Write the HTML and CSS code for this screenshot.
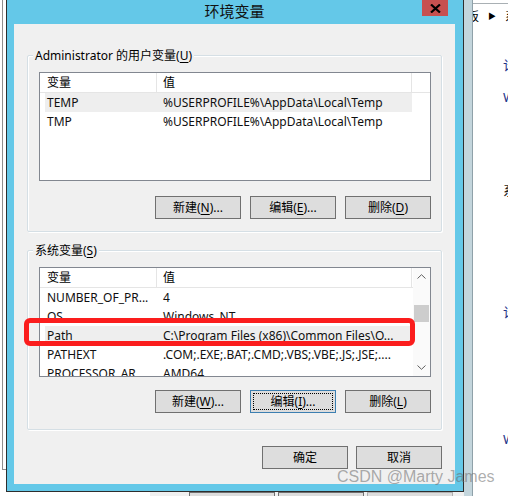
FILE: index.html
```html
<!DOCTYPE html>
<html lang="zh-CN">
<head>
<meta charset="utf-8">
<title>环境变量</title>
<link rel="stylesheet" href="styles.css">
</head>
<body>
<div class="desktop">
  <div class="win-left"></div>

  <div class="win-back">
    <span class="bk-btn">确定</span>
    <span class="bk-btn">取消</span>
    <span class="bk-btn bk-dis">应用(A)</span>
  </div>

  <div class="explorer">
    <div class="ex-frame"></div>
    <div class="ex-pane">
      <div class="ex-addr"><span>板</span><span class="tri">▶</span><span>系统</span></div>
      <div class="ex-line l1">计算机的基本信息</div>
      <div class="ex-line l2">Windows 版本</div>
      <div class="ex-line l3">系统</div>
      <div class="ex-line l4">计算机名、域和工作组设置</div>
      <div class="ex-line l5">Windows 激活</div>
    </div>
  </div>

  <div class="dialog">
    <div class="titlebar">
      <span class="title">环境变量</span>
      <span class="close"><svg width="11" height="9" viewBox="0 0 11 9"><path d="M1 0.5 L10 8.5 M10 0.5 L1 8.5" stroke="#000" stroke-width="2.2" fill="none"/></svg></span>
    </div>
    <div class="content">
      <div class="group g1">
        <div class="glabel">Administrator 的用户变量(<u>U</u>)</div>
        <div class="list">
          <div class="lmain">
            <div class="lhead"><span class="h1">变量</span><span class="h2">值</span></div>
            <div class="row sel"><span class="c1">TEMP</span><span class="c2">%USERPROFILE%\AppData\Local\Temp</span></div>
            <div class="row"><span class="c1">TMP</span><span class="c2">%USERPROFILE%\AppData\Local\Temp</span></div>
          </div>
        </div>
        <div class="btns">
          <span class="btn">新建(<u>N</u>)...</span>
          <span class="btn">编辑(<u>E</u>)...</span>
          <span class="btn">删除(<u>D</u>)</span>
        </div>
      </div>

      <div class="group g2">
        <div class="glabel">系统变量(<u>S</u>)</div>
        <div class="list">
          <div class="lmain">
            <div class="lhead"><span class="h1">变量</span><span class="h2">值</span></div>
            <div class="row"><span class="c1">NUMBER_OF_PR...</span><span class="c2">4</span></div>
            <div class="row"><span class="c1">OS</span><span class="c2">Windows_NT</span></div>
            <div class="row sel"><span class="c1">Path</span><span class="c2">C:\Program Files (x86)\Common Files\O...</span></div>
            <div class="row"><span class="c1">PATHEXT</span><span class="c2">.COM;.EXE;.BAT;.CMD;.VBS;.VBE;.JS;.JSE;....</span></div>
            <div class="row"><span class="c1">PROCESSOR_AR...</span><span class="c2">AMD64</span></div>
          </div>
          <div class="sbar">
            <span class="sarrow"><svg width="9" height="5" viewBox="0 0 9 5"><path d="M0.5 4.5 L4.5 0.7 L8.5 4.5" stroke="#606060" fill="none"/></svg></span>
            <span class="thumb"></span>
            <span class="spacer"></span>
            <span class="sarrow"><svg width="9" height="5" viewBox="0 0 9 5"><path d="M0.5 0.5 L4.5 4.3 L8.5 0.5" stroke="#606060" fill="none"/></svg></span>
          </div>
        </div>
        <div class="btns">
          <span class="btn">新建(<u>W</u>)...</span>
          <span class="btn focus">编辑(<u>I</u>)...</span>
          <span class="btn">删除(<u>L</u>)</span>
        </div>
      </div>

      <div class="dlg-btns">
        <span class="btn">确定</span>
        <span class="btn">取消</span>
      </div>

      <div class="mark"></div>
    </div>
  </div>

  <div class="watermark">CSDN @Marty James</div>
</div>
</body>
</html>
```

FILE: styles.css
```css
* { box-sizing: border-box; }
html, body { margin: 0; padding: 0; }
body {
  width: 508px;
  height: 496px;
  overflow: hidden;
  background: #fff;
  font-family: "Noto Sans", "Noto Sans CJK SC", sans-serif;
  font-size: 12px;
  color: #000;
}
u { text-decoration-thickness: 1px; text-underline-offset: 2px; }

.desktop { position: relative; width: 508px; height: 496px; overflow: hidden; background: #fff; }

/* windows behind the dialog */
.win-left {
  position: absolute; left: 2px; top: -1px; width: 120px; height: 471px;
  border: 1px solid #8e8e8e; background: #fff;
}
.win-back {
  position: absolute; left: 150px; top: 470px; width: 320px; height: 40px;
  background: #f0f0f0; display: flex; gap: 3px; padding: 22px 0 0 39px;
}
.bk-btn {
  width: 86px; height: 23px; border: 1px solid #707070; background: #dddddd;
  text-align: center; line-height: 21px;
}
.bk-dis { color: #8a8a8a; border-color: #b0b0b0; }

.explorer { position: absolute; left: 464px; top: 0; right: 0; bottom: 0; display: flex; }
.ex-frame { width: 9px; background: #c3d5dc; border-right: 1px solid #8fa1a9; }
.ex-pane { flex: 1; overflow: hidden; background: #fff; }
.ex-addr {
  margin-top: 3px; border-top: 1px solid #a9b0b4; height: 24px;
  display: flex; align-items: center; white-space: nowrap; margin-left: -6px; gap: 9px;
}
.ex-addr .tri { font-size: 8px; }
.ex-line { white-space: nowrap; margin-left: 30px; font-size: 13px; line-height: 16px; color: #1a1a1a; }
.l1 { margin-top: 30px; color: #1e3287; }
.l2 { margin-top: 16px; color: #1e3287; }
.l3 { margin-top: 77px; }
.l4 { margin-top: 106px; color: #1e3287; }
.l5 { margin-top: 111px; color: #1e3287; }

/* dialog */
.dialog {
  position: absolute; left: 6px; top: -1px; width: 458px; height: 493px;
  border: 1px solid #2e2e2e; background: #64c8e8;
  padding: 0 8px 7px 7px; display: flex; flex-direction: column;
}
.titlebar { height: 24px; flex: none; display: grid; grid-template-columns: 1fr auto 1fr; }
.title {
  grid-column: 2; font-family: "Noto Sans CJK SC", sans-serif; font-size: 15px;
  line-height: 22px; color: #111;
}
.close {
  grid-column: 3; justify-self: end; align-self: start; margin-right: 7px;
  width: 26px; height: 16px; background: #c75050;
  display: flex; align-items: center; justify-content: center;
}

.content { flex: 1; background: #f0f0f0; position: relative; display: flex; flex-direction: column; }

.group {
  margin: 0 13px; border: 1px solid #d5dfe5; border-radius: 2px;
  box-shadow: inset 1px 1px 0 #fff, 1px 1px 0 #fff;
  display: flex; flex-direction: column;
}
.g1 { margin-top: 31px; padding: 0 10px 12px 11px; }
.g2 { margin-top: 18px; padding: 0 10px 16px 11px; }
.glabel {
  align-self: flex-start; margin: -8px 0 0 -6px; padding: 0 2px;
  height: 16px; line-height: 16px; background: #f0f0f0; white-space: nowrap;
}

.list {
  margin-top: 8px; height: 109px; border: 1px solid #828790; background: #fff;
  display: flex; overflow: hidden;
}
.g2 .list { height: 110px; }
.lmain { flex: 1; min-width: 0; display: flex; flex-direction: column; }
.lhead { height: 20px; flex: none; display: flex; border-bottom: 1px solid #e5e5e5; line-height: 19px; }
.lhead .h1 { width: 117px; padding-left: 7px; border-right: 1px solid #e5e5e5; }
.lhead .h2 { width: 255px; padding-left: 6px; border-right: 1px solid #e5e5e5; }
.row {
  height: 19px; flex: none; line-height: 19px; display: flex; margin-left: 5px; width: 367px;
  white-space: nowrap; color: #101010;
}
.row.sel { background: #eeeeee; }
.row .c1 { width: 112px; padding-left: 2px; overflow: hidden; }
.row .c2 { flex: 1; padding-left: 6px; overflow: hidden; }

.sbar { width: 17px; flex: none; display: flex; flex-direction: column; background: #fafafa; }
.sarrow { height: 17px; flex: none; display: flex; align-items: center; justify-content: center; }
.thumb { margin: 20px 1px 0; height: 17px; flex: none; background: #cdcdcd; }
.spacer { flex: 1; }

.btns { display: flex; justify-content: flex-end; gap: 9px; margin-top: 15px; }
.g2 .btns { margin-top: 13px; }
.btn {
  width: 86px; height: 23px; border: 1px solid #707070; background: #dddddd;
  text-align: center; line-height: 21px; white-space: nowrap;
}
.btn.focus { border-color: #3c7fb1; outline: 1px dotted #000; outline-offset: -4px; }

.dlg-btns { display: flex; justify-content: flex-end; gap: 8px; margin: 16px 13px 0; }

.mark {
  position: absolute; left: 10px; top: 294px; width: 391px; height: 28px;
  border: 5px solid #fb1d1d; border-radius: 6px;
}

.watermark {
  position: absolute; left: 337px; top: 468px;
  font-family: "Liberation Sans", Arial, sans-serif; font-size: 16px; line-height: 18px;
  color: rgba(105, 105, 105, 0.55);
}
```
